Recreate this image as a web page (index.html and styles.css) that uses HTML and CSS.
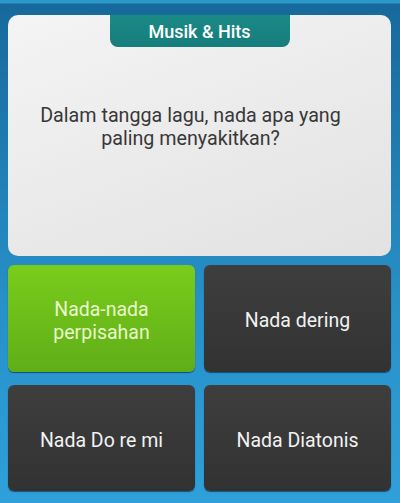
FILE: index.html
```html
<!DOCTYPE html>
<html lang="id">
<head>
<meta charset="utf-8">
<link rel="stylesheet" href="styles.css">
</head>
<body>
<div class="screen">
  <div class="card">
    <div class="tab">Musik &amp; Hits</div>
    <div class="question">Dalam tangga lagu, nada apa yang<br>paling menyakitkan?</div>
  </div>
  <div class="answers">
    <div class="btn green">Nada-nada<br>perpisahan</div>
    <div class="btn dark">Nada dering</div>
    <div class="btn dark">Nada Do re mi</div>
    <div class="btn dark">Nada Diatonis</div>
  </div>
</div>
</body>
</html>
```
FILE: styles.css
```css
html, body {
  margin: 0;
  padding: 0;
}
body {
  width: 400px;
  height: 503px;
  overflow: hidden;
  font-family: Roboto, "Liberation Sans", sans-serif;
}
.screen {
  box-sizing: border-box;
  width: 400px;
  height: 503px;
  padding: 15px 9px 0 8px;
  background: linear-gradient(to bottom, #2a98c8 0, #2a98c8 3px, #17699c 4px, #1d78ad 120px, #2790c8 300px, #2fa0da 100%);
}
.card {
  height: 241px;
  border-radius: 10px;
  background: linear-gradient(160deg, #f4f4f4 0%, #e9e9e9 60%, #e2e2e2 100%);
  display: flex;
  flex-direction: column;
  align-items: center;
}
.tab {
  width: 180px;
  height: 32px;
  background: linear-gradient(to bottom, #1b8a86, #167d7c);
  border-radius: 0 0 8px 8px;
  color: #ffffff;
  font-size: 18px;
  font-weight: 500;
  display: flex;
  align-items: center;
  justify-content: center;
}
.question {
  margin-top: 57px;
  padding-right: 18px;
  text-align: center;
  font-size: 19.7px;
  line-height: 23px;
  color: #383838;
}
.answers {
  margin-top: 9px;
  display: grid;
  grid-template-columns: 187px 187px;
  grid-template-rows: 107px 106px;
  column-gap: 9px;
  row-gap: 13px;
}
.btn {
  box-sizing: border-box;
  padding-top: 4px;
  border-radius: 6px;
  display: flex;
  align-items: center;
  justify-content: center;
  text-align: center;
  font-size: 19.5px;
  line-height: 23px;
  box-shadow: 0 1px 1px rgba(0, 30, 60, 0.6);
}
.green {
  background: linear-gradient(to bottom, #7acc1c, #5fae18);
  color: #eaf6cc;
}
.dark {
  background: linear-gradient(to bottom, #3e3e3e, #323232);
  color: #f2f2f2;
}
```
